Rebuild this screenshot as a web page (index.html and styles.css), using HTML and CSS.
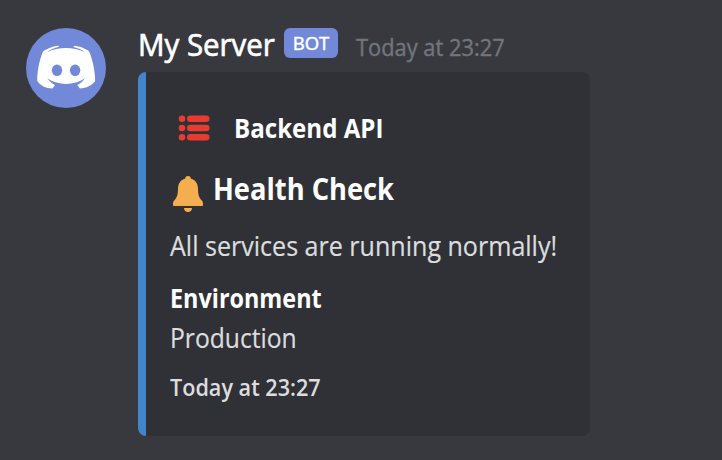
FILE: index.html
```html
<!DOCTYPE html>
<html lang="en">
<head>
<meta charset="utf-8">
<title>My Server</title>
<link rel="stylesheet" href="styles.css">
</head>
<body>
<article class="message">
  <svg class="avatar" viewBox="0 0 80 80" aria-hidden="true">
    <circle cx="40" cy="40" r="40" fill="#7289da"/>
    <path fill="#fff" d="M32.500 17.800C26 18.400 20 21.500 17.200 23.300C13.500 31 11.200 43 11.200 53C14 57.500 20 60.400 26.500 60.500L29 57C26 55.500 23.500 53.200 21.200 50.200C32 57.800 48 57.800 59 50.200C57 53.200 54.500 55.400 51.200 57L54 60.500C60.500 60.200 66 57.500 69.200 53C69 42 66.500 31 63 23.300C60 21 54 18.300 48 17.800L47.500 19C52 20 56 21.800 58.800 24.200C47 18.700 33 18.700 21 24.300C24.300 21.500 28 20 33 18.800Z"/>
    <ellipse cx="31" cy="42.300" rx="5.200" ry="5.800" fill="#7289da"/>
    <ellipse cx="49.100" cy="42.300" rx="5.200" ry="5.800" fill="#7289da"/>
  </svg>
  <div class="content">
    <header class="header">
      <span class="name">My Server</span>
      <span class="tag"><span class="tag-text">BOT</span></span>
      <time class="time">Today at 23:27</time>
    </header>
    <section class="embed">
      <div class="author">
        <svg class="list-icon" viewBox="0 0 32 26" aria-hidden="true">
          <g fill="#e93b30">
            <circle cx="4" cy="3.700" r="3.300"/><rect x="9" y=".4" width="22.500" height="6.600" rx="3.300"/>
            <circle cx="4" cy="13" r="3.300"/><rect x="9" y="9.700" width="22.500" height="6.600" rx="3.300"/>
            <circle cx="4" cy="22.300" r="3.300"/><rect x="9" y="19" width="22.500" height="6.600" rx="3.300"/>
          </g>
        </svg>
        <span class="author-name">Backend API</span>
      </div>
      <div class="title">
        <svg class="bell" viewBox="0 0 30 36" aria-hidden="true">
          <path fill="#f4ae4f" d="M15 0C13.200 0 12.200 1.200 12 2.800C7.500 4 5.200 7.500 5 12.500C4.900 18 4.500 21 1.200 24.500C.3 25.500 0 26.500 0 28V29Q0 30 1 30H29Q30 30 30 29V28C30 26.500 29.700 25.500 28.800 24.500C25.500 21 25.100 18 25 12.500C24.800 7.500 22.500 4 18 2.800C17.800 1.200 16.800 0 15 0ZM11 32H19C19 34.500 17.300 36 15 36S11 34.500 11 32Z"/>
        </svg>
        <span class="title-text">Health Check</span>
      </div>
      <p class="description">All services are running normally!</p>
      <div class="field-name">Environment</div>
      <div class="field-value">Production</div>
      <footer class="footer">Today at 23:27</footer>
    </section>
  </div>
</article>
</body>
</html>
```
FILE: styles.css
```css
* { box-sizing: border-box; }

body {
  margin: 0;
  height: 460px;
  background: #38393f;
  color: #fff;
  font-family: "Open Sans", "Noto Sans", sans-serif;
  white-space: nowrap;
  overflow: hidden;
}

.message { display: flex; gap: 32px; padding: 28px 0 0 26px; }
.avatar { width: 80px; height: 80px; flex: none; }
.content { width: 452px; }
.header { display: flex; height: 44px; align-items: flex-start; }

.name, .time, .author-name, .title-text, .description,
.field-name, .field-value, .footer { transform-origin: 0 50%; }

.name {
  width: 146px;
  font-size: 31px;
  line-height: 32px;
  -webkit-text-stroke: .7px currentColor;
  transform: scaleX(.95);
}
.tag {
  width: 54px;
  height: 30px;
  border-radius: 6px;
  background: #7289da;
  font-size: 18.500px;
  line-height: 30px;
  text-align: center;
}
.tag-text { -webkit-text-stroke: .5px currentColor; }
.time {
  margin-left: 18px;
  font-size: 23.500px;
  line-height: 38px;
  color: #72757b;
  -webkit-text-stroke: .4px currentColor;
  transform: scaleX(.93);
}

.embed {
  height: 364px;
  padding: 36px 24px 0;
  border-left: 8px solid #4185cc;
  border-radius: 8px;
  background: #2f3136;
}
.author { display: flex; align-items: center; height: 40px; }
.list-icon { width: 32px; height: 26px; margin-left: 8px; }
.author-name { margin-left: 24px; font-size: 27px; font-weight: 700; line-height: 40px; transform: scaleX(.893); }
.title { display: flex; align-items: center; height: 44px; margin-top: 24px; }
.bell { width: 30px; height: 36px; margin-left: 3px; }
.title-text { margin: 0 0 12px 10px; font-size: 31px; font-weight: 700; line-height: 34px; transform: scaleX(.88); }
.description { margin: 10px 0 0; font-size: 27px; line-height: 40px; color: #dcddde; -webkit-text-stroke: .2px currentColor; transform: scaleX(.928); }
.field-name { margin-top: 12px; font-size: 27px; font-weight: 700; line-height: 40px; transform: scaleX(.866); }
.field-value { font-size: 27px; line-height: 40px; color: #dcddde; -webkit-text-stroke: .2px currentColor; transform: scaleX(.913); }
.footer { margin-top: 13px; font-size: 23.500px; font-weight: 600; line-height: 32px; color: #dcddde; transform: scaleX(.92); }
```
